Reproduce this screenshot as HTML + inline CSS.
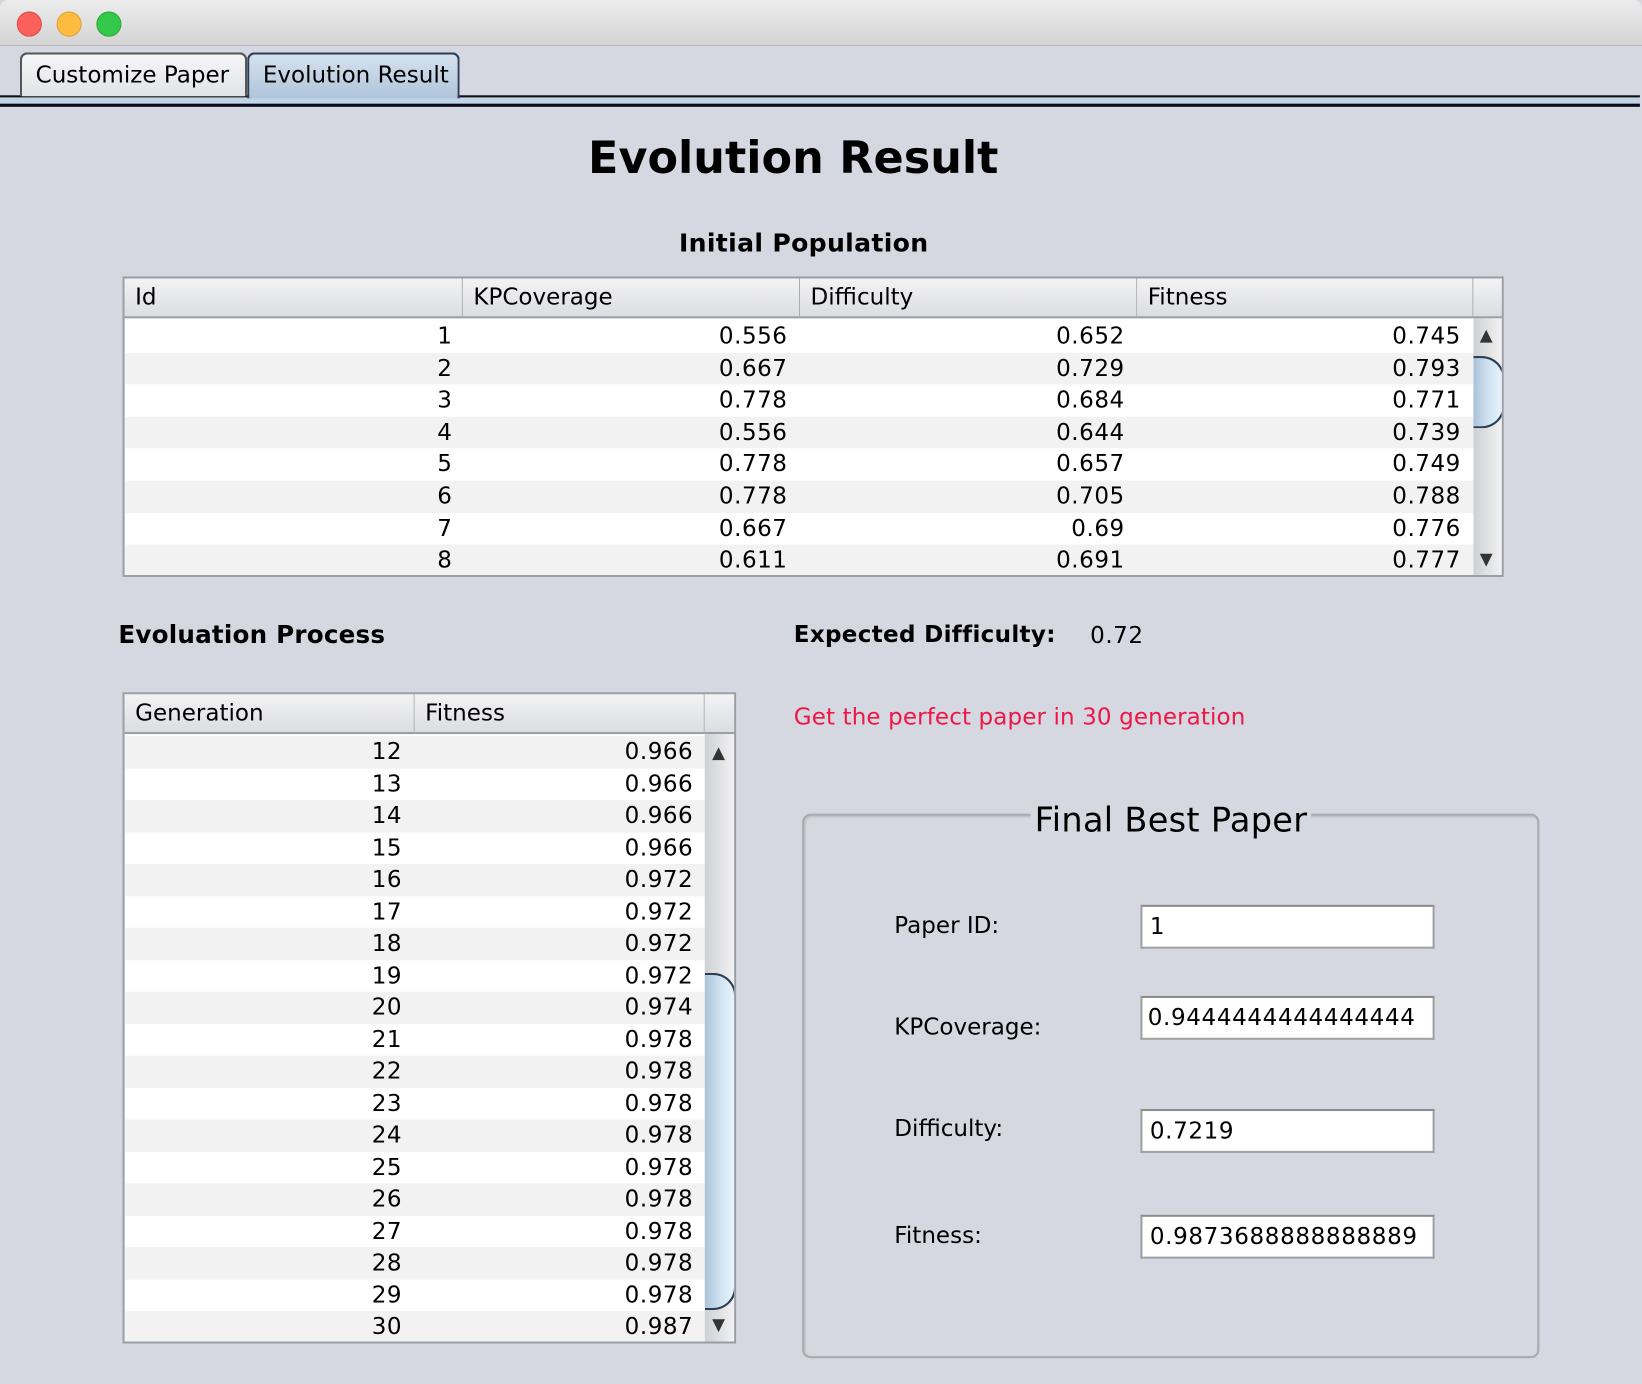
<!DOCTYPE html>
<html><head><meta charset="utf-8"><style>
html,body{margin:0;padding:0;width:1642px;height:1384px;overflow:hidden;background:#d5d8e0}
#w{position:absolute;left:0;top:0;width:1568px;height:1322px;transform:scale(1.0472);transform-origin:0 0;background:#d5d8e0;font-family:"DejaVu Sans","Liberation Sans",sans-serif;color:#000}
.a{position:absolute;white-space:nowrap}
.tb{left:0;top:0;width:1568px;height:43px;background:linear-gradient(#ececec,#d4d4d4);border-bottom:1px solid #b8b8b8;border-radius:8px 8px 0 0}
.dot{width:22px;height:22px;border-radius:50%;top:11px}
.tab{top:50px;height:40px;border:2px solid #555;border-bottom:none;border-radius:7px 7px 0 0;font-size:22px;line-height:42px;padding:0 13px;box-sizing:border-box}
.tbl{background:#fff;border:2px solid #9a9ea6;box-sizing:border-box;overflow:hidden}
.hd{position:absolute;top:0;height:38px;background:linear-gradient(#f3f3f4,#dcdde0);border-bottom:2px solid #9a9ea6;box-sizing:border-box;border-right:1px solid #a8aab0;font-size:22px;line-height:38px;padding-left:10px}
.row{position:absolute;left:0;height:30.6px;font-size:22px;line-height:32px;letter-spacing:0.5px}
.row span{position:absolute;text-align:right}
.g{background:#f2f2f2}
.sb{position:absolute;background:linear-gradient(90deg,#cfd0d3,#f4f4f5);}
.th{position:absolute;border:2px solid #2a3e55;border-left:none;border-radius:0 22px 22px 0;background:linear-gradient(90deg,#a9c2da,#cfe1f0,#e8f6fc);box-sizing:border-box}
.lab{font-size:22px}
.fld{position:absolute;left:1089px;width:281px;height:42px;background:#fff;border:2px solid #a0a0a0;border-top-color:#8c8c8c;box-sizing:border-box;font-size:22px;line-height:40px;padding-left:7px;letter-spacing:0.6px}
.t1 span:nth-child(1){right:975px}.t1 span:nth-child(2){right:655px}.t1 span:nth-child(3){right:333px}.t1 span:nth-child(4){right:12px}
.t2 span:nth-child(1){right:289px}.t2 span:nth-child(2){right:11px}
</style></head><body><div id="w">
<div class="a tb"></div>
<div class="a dot" style="left:16px;background:#fc605c;border:1px solid #de4a45"></div>
<div class="a dot" style="left:54px;background:#fdbc40;border:1px solid #dea236"></div>
<div class="a dot" style="left:92px;background:#34c84a;border:1px solid #27aa35"></div>
<div class="a" style="left:0;top:91px;width:1566px;height:6px;background:#c1d4e6;border-top:2px solid #111;border-bottom:3px solid #0a0a1a"></div>
<div class="a tab" style="left:19px;width:217px;background:linear-gradient(#f6f6f8,#e2e3e7);height:42px">Customize Paper</div>
<div class="a tab" style="left:236px;width:203px;background:linear-gradient(#d6e2ee,#aec5da);border-color:#2b3f57;height:44px">Evolution Result</div>

<div class="a" style="left:0;width:1515px;text-align:center;top:127px;font-size:42.5px;font-weight:bold">Evolution Result</div>
<div class="a" style="left:0;width:1535px;text-align:center;top:218px;font-size:24px;font-weight:bold;letter-spacing:0.3px">Initial Population</div>

<div class="a tbl" style="left:117px;top:264px;width:1319px;height:287px">
<div class="hd" style="left:0;width:323px">Id</div>
<div class="hd" style="left:323px;width:322px">KPCoverage</div>
<div class="hd" style="left:645px;width:322px">Difficulty</div>
<div class="hd" style="left:967px;width:321px">Fitness</div>
<div class="hd" style="left:1288px;width:31px;border-right:none"></div>
<div class="row t1" style="top:40px;width:1288px"><span>1</span><span>0.556</span><span>0.652</span><span>0.745</span></div>
<div class="row t1 g" style="top:70.6px;width:1288px"><span>2</span><span>0.667</span><span>0.729</span><span>0.793</span></div>
<div class="row t1" style="top:101.2px;width:1288px"><span>3</span><span>0.778</span><span>0.684</span><span>0.771</span></div>
<div class="row t1 g" style="top:131.8px;width:1288px"><span>4</span><span>0.556</span><span>0.644</span><span>0.739</span></div>
<div class="row t1" style="top:162.4px;width:1288px"><span>5</span><span>0.778</span><span>0.657</span><span>0.749</span></div>
<div class="row t1 g" style="top:193px;width:1288px"><span>6</span><span>0.778</span><span>0.705</span><span>0.788</span></div>
<div class="row t1" style="top:223.6px;width:1288px"><span>7</span><span>0.667</span><span>0.69</span><span>0.776</span></div>
<div class="row t1 g" style="top:254.2px;width:1288px"><span>8</span><span>0.611</span><span>0.691</span><span>0.777</span></div>
<div class="sb" style="left:1288px;top:38px;width:29px;height:247px"></div>
<div class="a" style="left:1294px;top:44px;font-size:16px;color:#333">▲</div>
<div class="th" style="left:1288px;top:74px;width:30px;height:69px"></div>
<div class="a" style="left:1294px;top:258px;font-size:16px;color:#333">▼</div>
</div>

<div class="a" style="left:113px;top:592px;font-size:23.5px;font-weight:bold;letter-spacing:0.2px">Evoluation Process</div>
<div class="a" style="left:758px;top:594px;font-size:22px;font-weight:bold;letter-spacing:0.3px">Expected Difficulty:</div>
<div class="a" style="left:1041px;top:595px;font-size:22px;letter-spacing:0.5px">0.72</div>
<div class="a" style="left:758px;top:673px;font-size:22px;color:#ee1745;letter-spacing:0.1px">Get the perfect paper in 30 generation</div>

<div class="a tbl" style="left:117px;top:661px;width:586px;height:622px">
<div class="hd" style="left:0;width:277px">Generation</div>
<div class="hd" style="left:277px;width:277px">Fitness</div>
<div class="hd" style="left:554px;width:32px;border-right:none"></div>
<div class="row t2 g" style="top:40px;width:554px"><span>12</span><span>0.966</span></div>
<div class="row t2" style="top:70.5px;width:554px"><span>13</span><span>0.966</span></div>
<div class="row t2 g" style="top:101px;width:554px"><span>14</span><span>0.966</span></div>
<div class="row t2" style="top:131.5px;width:554px"><span>15</span><span>0.966</span></div>
<div class="row t2 g" style="top:162px;width:554px"><span>16</span><span>0.972</span></div>
<div class="row t2" style="top:192.5px;width:554px"><span>17</span><span>0.972</span></div>
<div class="row t2 g" style="top:223px;width:554px"><span>18</span><span>0.972</span></div>
<div class="row t2" style="top:253.5px;width:554px"><span>19</span><span>0.972</span></div>
<div class="row t2 g" style="top:284px;width:554px"><span>20</span><span>0.974</span></div>
<div class="row t2" style="top:314.5px;width:554px"><span>21</span><span>0.978</span></div>
<div class="row t2 g" style="top:345px;width:554px"><span>22</span><span>0.978</span></div>
<div class="row t2" style="top:375.5px;width:554px"><span>23</span><span>0.978</span></div>
<div class="row t2 g" style="top:406px;width:554px"><span>24</span><span>0.978</span></div>
<div class="row t2" style="top:436.5px;width:554px"><span>25</span><span>0.978</span></div>
<div class="row t2 g" style="top:467px;width:554px"><span>26</span><span>0.978</span></div>
<div class="row t2" style="top:497.5px;width:554px"><span>27</span><span>0.978</span></div>
<div class="row t2 g" style="top:528px;width:554px"><span>28</span><span>0.978</span></div>
<div class="row t2" style="top:558.5px;width:554px"><span>29</span><span>0.978</span></div>
<div class="row t2 g" style="top:589px;width:554px"><span>30</span><span>0.987</span></div>
<div class="sb" style="left:554px;top:38px;width:30px;height:582px"></div>
<div class="a" style="left:561px;top:46px;font-size:16px;color:#333">▲</div>
<div class="th" style="left:554px;top:266px;width:30px;height:322px"></div>
<div class="a" style="left:561px;top:592px;font-size:16px;color:#333">▼</div>
</div>

<div class="a" style="left:766px;top:777px;width:704px;height:520px;border:2px solid #a8aaae;border-radius:8px;box-sizing:border-box;box-shadow:inset 1px 1px 2px rgba(0,0,0,0.15)"></div>
<div class="a" style="left:984px;top:764px;padding:0 4px;background:#d5d8e0;font-size:32px;letter-spacing:0.3px">Final Best Paper</div>
<div class="a lab" style="left:854px;top:872px">Paper ID:</div>
<div class="a lab" style="left:854px;top:969px">KPCoverage:</div>
<div class="a lab" style="left:854px;top:1066px">Difficulty:</div>
<div class="a lab" style="left:854px;top:1168px">Fitness:</div>
<div class="fld" style="top:864px">1</div>
<div class="fld" style="top:951px;padding-left:5px">0.9444444444444444</div>
<div class="fld" style="top:1059px">0.7219</div>
<div class="fld" style="top:1160px">0.9873688888888889</div>
</div></body></html>
